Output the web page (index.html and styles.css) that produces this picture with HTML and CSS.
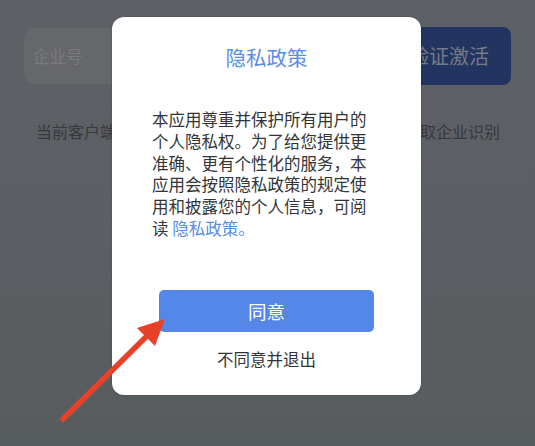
FILE: index.html
```html
<!DOCTYPE html>
<html lang="zh-CN">
<head>
<meta charset="utf-8">
<title>隐私政策</title>
<link rel="stylesheet" href="styles.css">
</head>
<body>
<div class="page">
  <div class="activate-row">
    <div class="input">企业号</div>
    <div class="verify-btn">验证激活</div>
  </div>
  <p class="hint">当前客户端尚未激活，请先输入企业号并验证激活以获取企业识别</p>
</div>

<div class="dialog">
  <h1 class="dialog-title">隐私政策</h1>
  <p class="dialog-body">本应用尊重并保护所有用户的个人隐私权。为了给您提供更准确、更有个性化的服务，本应用会按照隐私政策的规定使用和披露您的个人信息，可阅读 <span class="link">隐私政策。</span></p>
  <div class="agree-btn">同意</div>
  <div class="disagree">不同意并退出</div>
</div>

<svg class="arrow" width="535" height="446" viewBox="0 0 535 446">
  <line x1="63" y1="419" x2="150" y2="333" stroke="#e8412a" stroke-width="5.5" stroke-linecap="round"/>
  <polygon points="165,319 137,328 155,346" fill="#e8412a"/>
</svg>
</body>
</html>
```

FILE: styles.css
```css
* { box-sizing: border-box; }

html, body {
  margin: 0;
  padding: 0;
}

body {
  width: 535px;
  height: 446px;
  overflow: hidden;
  position: relative;
  font-family: "Noto Sans CJK SC", "Noto Sans", sans-serif;
  background: linear-gradient(180deg, #5e6067 0%, #5c5f64 50%, #575c5d 100%);
}

.page {
  padding: 27px 24px 0 24px;
}

.activate-row {
  display: flex;
  align-items: center;
  gap: 16px;
}

.input {
  flex: 1;
  height: 56px;
  border-radius: 10px;
  background: #66676a;
  color: #7a7b7e;
  font-size: 16.5px;
  line-height: 56px;
  padding-left: 9px;
}

.verify-btn {
  width: 118px;
  height: 58px;
  border-radius: 8px;
  background: #22345f;
  color: #767b86;
  font-size: 20px;
  line-height: 58px;
  text-align: right;
  padding-right: 22px;
}

.hint {
  margin: 35px 0 0 12px;
  font-size: 16px;
  line-height: 22px;
  color: #37383c;
  white-space: nowrap;
}

.dialog {
  position: absolute;
  left: 112px;
  top: 17px;
  width: 309px;
  height: 378px;
  background: #ffffff;
  border-radius: 12px;
  box-shadow: 0 0 2px rgba(0, 0, 0, 0.25);
  display: flex;
  flex-direction: column;
  align-items: center;
  padding: 25px 0 0 0;
}

.dialog-title {
  margin: 0;
  font-weight: normal;
  font-size: 20.5px;
  line-height: 30px;
  color: #5a8de7;
}

.dialog-body {
  align-self: stretch;
  margin: 37px 47px 0 40px;
  font-size: 16.5px;
  line-height: 21.8px;
  color: #333438;
}

.link {
  color: #5a8de7;
}

.agree-btn {
  margin-top: 50px;
  width: 215px;
  height: 42px;
  border-radius: 5px;
  background: #5587e9;
  color: #ffffff;
  font-size: 18.5px;
  line-height: 42px;
  text-align: center;
}

.disagree {
  margin-top: 16px;
  font-size: 16.5px;
  line-height: 22px;
  color: #333438;
}

.arrow {
  position: absolute;
  left: 0;
  top: 0;
  pointer-events: none;
}
```
